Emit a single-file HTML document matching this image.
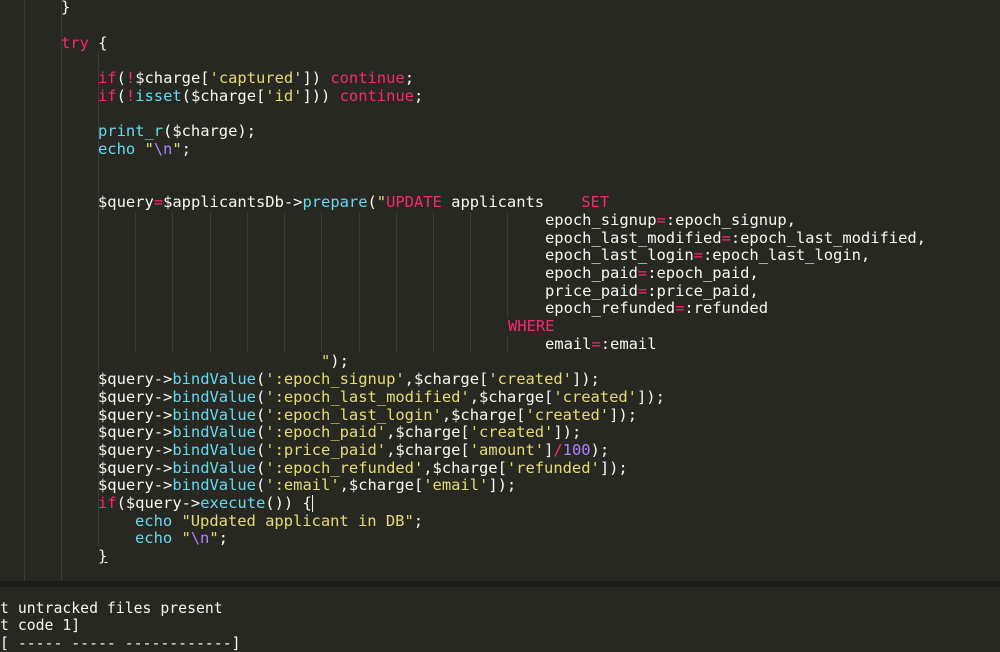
<!DOCTYPE html>
<html><head><meta charset="utf-8"><style>
html,body{margin:0;padding:0;}
body{width:1000px;height:637px;overflow:hidden;background:#272822;position:relative;font-family:"DejaVu Sans Mono","Liberation Mono",monospace;}
.l{position:absolute;white-space:pre;font-size:15.5px;line-height:17.7px;color:#f8f8f2;letter-spacing:-0.04px;margin-top:1px;}
.k{color:#f92672}.s{color:#e6db74}.f{color:#66d9ef}.n{color:#ae81ff}
.g{position:absolute;width:1px;background:#3a3b34;}
.band{position:absolute;left:0;top:581px;width:1000px;height:6px;background:#1c1d19;}
.term{position:absolute;left:0;top:587px;width:1000px;height:50px;background:#272822;}
.t{position:absolute;left:0;white-space:pre;font-size:14.8px;line-height:17.4px;color:#f8f8f2;}
</style></head><body>
<div class="g" style="left:24px;top:0;height:581px"></div>
<div class="g" style="left:61px;top:0;height:581px"></div>
<div class="g" style="left:98px;top:52px;height:495px"></div>
<div class="g" style="left:135px;top:212px;height:140px"></div>
<div class="g" style="left:172px;top:212px;height:140px"></div>
<div class="g" style="left:210px;top:212px;height:140px"></div>
<div class="g" style="left:247px;top:212px;height:140px"></div>
<div class="g" style="left:284px;top:212px;height:140px"></div>
<div class="g" style="left:321px;top:212px;height:140px"></div>
<div class="g" style="left:359px;top:212px;height:140px"></div>
<div class="g" style="left:396px;top:212px;height:140px"></div>
<div class="g" style="left:433px;top:212px;height:140px"></div>
<div class="g" style="left:470px;top:212px;height:140px"></div>
<div class="g" style="left:507px;top:212px;height:105px"></div>
<div class="g" style="left:507px;top:336px;height:16px"></div>

<div class="l" style="left:61px;top:-1.6px">}</div>
<div class="l" style="left:61px;top:33.8px"><span class="k">try</span> {</div>
<div class="l" style="left:98px;top:69.2px"><span class="k">if</span>(<span class="k">!</span>$charge[<span class="s">'captured'</span>]) <span class="k">continue</span>;</div>
<div class="l" style="left:98px;top:86.9px"><span class="k">if</span>(<span class="k">!</span><span class="f">isset</span>($charge[<span class="s">'id'</span>])) <span class="k">continue</span>;</div>
<div class="l" style="left:98px;top:122.3px"><span class="f">print_r</span>($charge);</div>
<div class="l" style="left:98px;top:140px"><span class="f">echo</span> <span class="s">"</span><span class="n">\n</span><span class="s">"</span>;</div>
<div class="l" style="left:98px;top:193.1px">$query<span class="k">=</span>$applicantsDb-&gt;<span class="f">prepare</span>(<span class="s">"</span><span class="k">UPDATE</span> applicants    <span class="k">SET</span></div>
<div class="l" style="left:545px;top:210.8px">epoch_signup<span class="k">=</span>:epoch_signup,</div>
<div class="l" style="left:545px;top:228.5px">epoch_last_modified<span class="k">=</span>:epoch_last_modified,</div>
<div class="l" style="left:545px;top:246.2px">epoch_last_login<span class="k">=</span>:epoch_last_login,</div>
<div class="l" style="left:545px;top:263.9px">epoch_paid<span class="k">=</span>:epoch_paid,</div>
<div class="l" style="left:545px;top:281.6px">price_paid<span class="k">=</span>:price_paid,</div>
<div class="l" style="left:545px;top:299.3px">epoch_refunded<span class="k">=</span>:refunded</div>
<div class="l" style="left:508px;top:317px"><span class="k">WHERE</span></div>
<div class="l" style="left:545px;top:334.7px">email<span class="k">=</span>:email</div>
<div class="l" style="left:321px;top:352.4px"><span class="s">"</span>);</div>
<div class="l" style="left:98px;top:370.1px">$query-&gt;<span class="f">bindValue</span>(<span class="s">':epoch_signup'</span>,$charge[<span class="s">'created'</span>]);</div>
<div class="l" style="left:98px;top:387.8px">$query-&gt;<span class="f">bindValue</span>(<span class="s">':epoch_last_modified'</span>,$charge[<span class="s">'created'</span>]);</div>
<div class="l" style="left:98px;top:405.5px">$query-&gt;<span class="f">bindValue</span>(<span class="s">':epoch_last_login'</span>,$charge[<span class="s">'created'</span>]);</div>
<div class="l" style="left:98px;top:423.2px">$query-&gt;<span class="f">bindValue</span>(<span class="s">':epoch_paid'</span>,$charge[<span class="s">'created'</span>]);</div>
<div class="l" style="left:98px;top:440.9px">$query-&gt;<span class="f">bindValue</span>(<span class="s">':price_paid'</span>,$charge[<span class="s">'amount'</span>]<span class="k">/</span><span class="n">100</span>);</div>
<div class="l" style="left:98px;top:458.6px">$query-&gt;<span class="f">bindValue</span>(<span class="s">':epoch_refunded'</span>,$charge[<span class="s">'refunded'</span>]);</div>
<div class="l" style="left:98px;top:476.3px">$query-&gt;<span class="f">bindValue</span>(<span class="s">':email'</span>,$charge[<span class="s">'email'</span>]);</div>
<div class="l" style="left:98px;top:494px"><span class="k">if</span>($query-&gt;<span class="f">execute</span>()) {</div>
<div style="position:absolute;left:312px;top:495px;width:1px;height:17px;background:#f8f8f2"></div>
<div class="l" style="left:135px;top:511.7px"><span class="f">echo</span> <span class="s">"Updated applicant in DB"</span>;</div>
<div class="l" style="left:135px;top:529.4px"><span class="f">echo</span> <span class="s">"</span><span class="n">\n</span><span class="s">"</span>;</div>
<div class="l" style="left:98px;top:547.1px;text-decoration:underline">}</div>

<div class="band"></div>
<div class="term">
<div class="t" style="top:12.5px">t untracked files present</div>
<div class="t" style="top:30px">t code 1]</div>
<div class="t" style="top:47.5px">[ ----- ----- ------------]</div>
</div>
</body></html>
